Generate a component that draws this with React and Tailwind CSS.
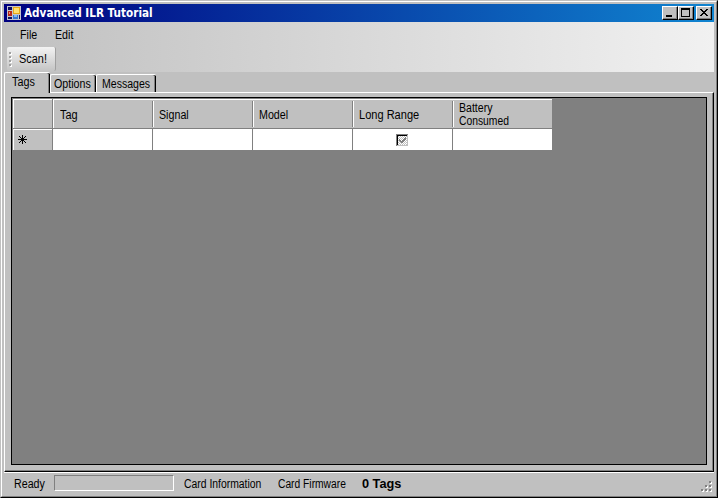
import React from "react";

// Condensed caption text used by menus, tabs, headers and status labels.
function Label({ children, className = "scale-x-[0.89]" }) {
  return (
    <span className={`block w-max origin-left whitespace-nowrap text-[12px] leading-[14px] ${className}`}>
      {children}
    </span>
  );
}

function AppIcon() {
  return (
    <svg className="shrink-0" width="14" height="14" viewBox="0 0 14 14" shapeRendering="crispEdges">
      <rect width="14" height="14" fill="#c4c4cc" />
      <rect x="1" y="1" width="4" height="3" fill="#101060" />
      <rect x="1" y="5" width="4" height="5" fill="#b82818" />
      <rect x="2" y="6" width="1" height="2" fill="#f09080" />
      <rect x="6" y="1" width="7" height="7" fill="#e8a818" />
      <rect x="7" y="2" width="5" height="5" fill="#ffe070" />
      <rect x="1" y="11" width="4" height="2" fill="#101060" />
      <rect x="6" y="9" width="5" height="4" fill="#3878d0" />
      <rect x="7" y="9" width="3" height="2" fill="#80b8f0" />
      <rect x="12" y="9" width="1" height="4" fill="#101060" />
    </svg>
  );
}

function CaptionButton({ children, className = "" }) {
  return (
    <div className={`h-[14px] w-4 border border-t-white border-l-white border-r-black border-b-black bg-[#c0c0c0] shadow-[inset_-1px_-1px_0_#808080] ${className}`}>
      <svg className="block" width="14" height="12" viewBox="0 0 14 12" shapeRendering="crispEdges">
        {children}
      </svg>
    </div>
  );
}

function TitleBar() {
  return (
    <div className="flex h-[18px] items-center bg-linear-to-r/srgb from-[#000080] to-[#1084d0] pl-[3px] pr-[2px]">
      <AppIcon />
      <div className="ml-[3px] flex-1 font-['DejaVu_Sans',sans-serif] text-[11.5px] leading-[18px] font-bold text-white">
        <span className="block w-max origin-left scale-x-[0.91] whitespace-nowrap">Advanced ILR Tutorial</span>
      </div>
      <div className="flex">
        <CaptionButton><rect x="3" y="8" width="6" height="2" /></CaptionButton>
        <CaptionButton>
          <path d="M2 1h9v9H2zM3 3v6h7V3z" fillRule="evenodd" />
        </CaptionButton>
        <CaptionButton className="ml-[2px]">
          <path d="M3 2h2v1h1v1h2V3h1V2h2v1h-1v1H9v1H8v1h1v1h1v1h1v1H9V8H8V7H6v1H5v1H3V8h1V7h1V6h1V5H5V4H4V3H3z" />
        </CaptionButton>
      </div>
    </div>
  );
}

function Toolbars() {
  return (
    <div className="h-[50px] bg-linear-to-r/srgb from-[#c0c0c0] to-[#f1f1f1]">
      <div className="flex h-[25px] pt-[6px] pl-4">
        <div className="w-[35px]"><Label>File</Label></div>
        <Label>Edit</Label>
      </div>
      <div className="flex h-6 w-[49px] ml-[3px] rounded-[2px] bg-linear-to-b/srgb from-[#f3f3f3] to-[#c4c4c4] border-r border-[#a0a0a0]">
        <div className="ml-[2px] mt-[5px] flex w-[10px] flex-col gap-[2px]">
          {[0, 1, 2, 3].map((i) => (
            <i key={i} className="size-[2px] bg-[#a0a0a0] shadow-[1px_1px_0_white]" />
          ))}
        </div>
        <div className="pt-[5px]"><Label className="scale-x-[0.91]">Scan!</Label></div>
      </div>
    </div>
  );
}

function Tab({ children, active = false, className = "" }) {
  return (
    <div className={`relative rounded-t-[2px] border-t border-l border-white bg-[#c0c0c0] shadow-[inset_-1px_0_0_black,inset_-2px_0_0_#808080] ${active ? "z-10 -mb-px h-[21px] pt-[2px]" : "h-[18px] pt-[2px]"} ${className}`}>
      {children}
    </div>
  );
}

function HeaderCell({ children, first = false, last = false }) {
  return (
    <div className={`flex h-[30px] shrink-0 items-center border-b border-[#808080] ${first ? "w-[100px] pl-[7px]" : "w-[100px] pl-[6px]"}`}>
      <div className="flex h-full flex-1 items-center pt-[3px]">
        <div>{children}</div>
      </div>
      {!last && <div className="h-[26px] w-[2px] translate-x-px border-l border-[#808080] bg-white" />}
    </div>
  );
}

function CheckBox() {
  return (
    <svg className="-ml-[2px]" width="12" height="12" viewBox="0 0 12 12" shapeRendering="crispEdges">
      <defs>
        <pattern id="dither" width="2" height="2" patternUnits="userSpaceOnUse">
          <rect width="2" height="2" fill="#fff" />
          <path d="M0 0h1v1H0zM1 1h1v1H1z" fill="#c0c0c0" />
        </pattern>
      </defs>
      <rect width="12" height="12" fill="#c0c0c0" />
      <path d="M0 0h12v1H1v11H0z" fill="#808080" />
      <path d="M1 1h10v1H2v9H1z" fill="#000" />
      <rect x="2" y="2" width="9" height="9" fill="url(#dither)" />
      <path d="M3 5h1v1h1v1h1V6h1V5h1V4h1V3h1v3H9v1H8v1H7v1H5V8H4V7H3z" fill="#808080" />
    </svg>
  );
}

function DataGrid() {
  return (
    <div className="ml-[6px] mt-[4px] h-[368px] w-[696px] border border-black bg-[#808080]">
      <div className="flex w-[540px] border-t border-[#808080] bg-[#c0c0c0] shadow-[inset_0_1px_0_white]">
        <div className="h-[30px] w-[41px] border-l border-b border-r border-[#808080] shadow-[inset_1px_1px_0_white]" />
        <div className="flex h-[30px] w-[499px] overflow-hidden shadow-[inset_1px_1px_0_white]">
          <HeaderCell first><Label className="scale-x-[0.91]">Tag</Label></HeaderCell>
          <HeaderCell><Label>Signal</Label></HeaderCell>
          <HeaderCell><Label>Model</Label></HeaderCell>
          <HeaderCell><Label className="scale-x-[0.92]">Long Range</Label></HeaderCell>
          <HeaderCell last>
            <div className="-mt-[2px]">
              <Label className="scale-x-[0.88] -mb-px">Battery</Label>
              <Label className="scale-x-[0.86]">Consumed</Label>
            </div>
          </HeaderCell>
        </div>
      </div>
      <div className="flex h-[21px] w-[540px] bg-white">
        <div className="flex w-[41px] items-center border-l border-r border-[#808080] bg-[#c0c0c0] pl-[5px] shadow-[inset_1px_1px_0_white]">
          <svg width="9" height="9" viewBox="0 0 9 9" shapeRendering="crispEdges">
            <path d="M4 0h1v9H4zM0 4h9v1H0zM3 3h3v3H3zM1 1h1v1H1zM2 2h1v1H2zM6 2h1v1H6zM7 1h1v1H7zM2 6h1v1H2zM1 7h1v1H1zM6 6h1v1H6zM7 7h1v1H7z" />
          </svg>
        </div>
        <div className="w-[99px]" />
        <div className="w-[100px] border-l border-[#808080]" />
        <div className="w-[100px] border-l border-[#808080]" />
        <div className="flex w-[100px] items-center justify-center border-l border-[#808080]"><CheckBox /></div>
        <div className="w-[100px] border-l border-[#808080]" />
      </div>
    </div>
  );
}

function StatusBar() {
  return (
    <div className="flex h-6 border-t border-white">
      <div className="w-[50px] pl-[10px] pt-[4px]"><Label>Ready</Label></div>
      <div className="mt-[2px] h-4 w-[120px] border border-t-[#808080] border-l-[#808080] border-r-white border-b-white" />
      <div className="w-[104px] pl-[10px] pt-[4px]"><Label className="scale-x-[0.865]">Card Information</Label></div>
      <div className="w-[84px] pt-[4px]"><Label className="scale-x-[0.855]">Card Firmware</Label></div>
      <div className="flex-1 pt-[4px] font-bold"><Label className="scale-x-[1.06]">0 Tags</Label></div>
      <svg className="mt-[8px] mr-px" width="12" height="12" viewBox="0 0 12 12" shapeRendering="crispEdges">
        {[[9, 1], [5, 5], [9, 5], [1, 9], [5, 9], [9, 9]].map(([x, y]) => (
          <g key={`${x}-${y}`}>
            <rect x={x} y={y} width="2" height="2" fill="#fff" />
            <rect x={x - 1} y={y - 1} width="2" height="2" fill="#808080" />
          </g>
        ))}
      </svg>
    </div>
  );
}

export default function App() {
  return (
    <div className="h-[498px] w-[718px] overflow-hidden border border-t-[#c0c0c0] border-l-[#c0c0c0] border-r-black border-b-black bg-[#c0c0c0] font-['Liberation_Sans',Arial,sans-serif] text-black">
      <div className="h-full border border-t-white border-l-white border-r-[#808080] border-b-[#808080] pt-[2px] pr-[2px] pl-[2px]">
        <TitleBar />
        <Toolbars />
        <div className="flex h-5 items-end">
          <Tab active className="w-[46px] pl-[7px]"><Label className="scale-x-[0.9]">Tags</Label></Tab>
          <Tab className="w-[46px] pl-[3px]"><Label>Options</Label></Tab>
          <Tab className="w-[60px] pl-[5px]"><Label className="scale-x-[0.88]">Messages</Label></Tab>
        </div>
        <div className="h-[380px] border border-t-white border-l-white border-r-black border-b-black shadow-[inset_-1px_-1px_0_#808080]">
          <DataGrid />
        </div>
        <StatusBar />
      </div>
    </div>
  );
}
